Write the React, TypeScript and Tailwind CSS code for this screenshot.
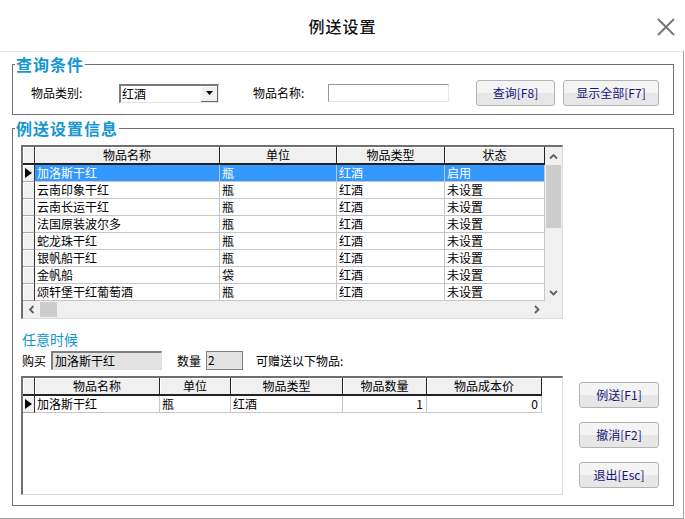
const blue = "text-[#1296d4]";

const mainRows = [
  ["加洛斯干红", "瓶", "红酒", "启用"],
  ["云南印象干红", "瓶", "红酒", "未设置"],
  ["云南长运干红", "瓶", "红酒", "未设置"],
  ["法国原装波尔多", "瓶", "红酒", "未设置"],
  ["蛇龙珠干红", "瓶", "红酒", "未设置"],
  ["银帆船干红", "瓶", "红酒", "未设置"],
  ["金帆船", "袋", "红酒", "未设置"],
  ["颂轩堡干红葡萄酒", "瓶", "红酒", "未设置"],
];

const mainCols = [
  { title: "物品名称", w: "w-[185px]" },
  { title: "单位", w: "w-[117px]" },
  { title: "物品类型", w: "w-[108px]" },
  { title: "状态", w: "w-[100px]" },
];

const giftCols = [
  { title: "物品名称", w: "w-[125px]", right: false },
  { title: "单位", w: "w-[71px]", right: false },
  { title: "物品类型", w: "w-[112px]", right: false },
  { title: "物品数量", w: "w-[84px]", right: true },
  { title: "物品成本价", w: "w-[115px]", right: true },
];

function Chevron({ dir }: { dir: "up" | "down" | "left" | "right" }) {
  const d = {
    up: "M1 5.5 L4.5 2 L8 5.5",
    down: "M1 2 L4.5 5.5 L8 2",
    left: "M5.5 1 L2 4.5 L5.5 8",
    right: "M2 1 L5.5 4.5 L2 8",
  }[dir];
  const vert = dir === "up" || dir === "down";
  return (
    <svg width={vert ? 9 : 7} height={vert ? 7 : 9} viewBox={vert ? "0 0 9 7" : "0 0 7 9"}>
      <path d={d} stroke="#606060" strokeWidth="1.8" fill="none" />
    </svg>
  );
}

function Pointer() {
  return (
    <svg width="7" height="10" viewBox="0 0 7 10">
      <path d="M0 0 L7 5 L0 10 Z" fill="#000" />
    </svg>
  );
}

function WinButton({ label, w }: { label: string; w: string }) {
  return (
    <button
      className={`${w} h-[26px] rounded-[3px] border border-[#b4b4b4] bg-[linear-gradient(to_bottom,#f4f4f4_50%,#e7e7e7_50%)] text-[12px] leading-[14px] text-[#14147a]`}
    >
      {label}
    </button>
  );
}

function HeadCell({ title, w }: { title: string; w: string }) {
  return (
    <div
      className={`${w} h-[18px] shrink-0 bg-[#f0f0f0] border-r border-b-2 border-r-[#222] border-b-[#222] shadow-[inset_1px_1px_0_#fff] text-center leading-[16px]`}
    >
      {title}
    </div>
  );
}

function IndCell({ head, active }: { head?: boolean; active?: boolean }) {
  return (
    <div
      className={`w-[12px] shrink-0 flex items-center justify-center bg-[#f0f0f0] border-r border-r-[#333] shadow-[inset_1px_1px_0_#fff] ${
        head ? "h-[18px] border-b-2 border-b-[#222]" : "h-[17px] border-b border-b-[#a8a8a8]"
      }`}
    >
      {active && <Pointer />}
    </div>
  );
}

function MainGrid() {
  return (
    <div className="w-[542px] border-t-2 border-l-2 border-t-[#6f6f6f] border-l-[#6f6f6f] border-r border-b border-r-[#dcdcdc] border-b-[#dcdcdc] bg-white">
      <div className="flex">
        <div>
          <div className="flex">
            <IndCell head />
            {mainCols.map((c) => (
              <HeadCell key={c.title} title={c.title} w={c.w} />
            ))}
          </div>
          {mainRows.map((r, i) => (
            <div key={i} className="flex">
              <IndCell active={i === 0} />
              {r.map((v, j) => (
                <div
                  key={j}
                  className={`${mainCols[j].w} h-[17px] shrink-0 border-r border-b border-[#c6c6c6] px-[2px] leading-[16px] whitespace-nowrap overflow-hidden ${
                    i === 0 ? "bg-[#3399ff] text-white" : ""
                  }`}
                >
                  {v}
                </div>
              ))}
            </div>
          ))}
        </div>
        <div className="w-[17px] bg-[#f0f0f0] flex flex-col">
          <div className="h-[18px] flex items-center justify-center">
            <Chevron dir="up" />
          </div>
          <div className="mx-[1px] h-[63px] bg-[#cdcdcd]" />
          <div className="flex-1" />
          <div className="h-[17px] flex items-center justify-center">
            <Chevron dir="down" />
          </div>
        </div>
      </div>
      <div className="flex h-[17px] bg-[#f0f0f0]">
        <div className="w-[17px] flex items-center justify-center">
          <Chevron dir="left" />
        </div>
        <div className="my-[1px] w-[17px] bg-[#cdcdcd]" />
        <div className="flex-1" />
        <div className="w-[17px] flex items-center justify-center">
          <Chevron dir="right" />
        </div>
        <div className="w-[17px]" />
      </div>
    </div>
  );
}

function GiftGrid() {
  const row = ["加洛斯干红", "瓶", "红酒", "1", "0"];
  return (
    <div className="w-[542px] h-[119px] border-t-2 border-l-2 border-t-[#6f6f6f] border-l-[#6f6f6f] border-r border-b border-r-[#dcdcdc] border-b-[#dcdcdc] bg-white">
      <div className="flex">
        <IndCell head />
        {giftCols.map((c) => (
          <HeadCell key={c.title} title={c.title} w={c.w} />
        ))}
      </div>
      <div className="flex">
        <IndCell active />
        {row.map((v, j) => (
          <div
            key={j}
            className={`${giftCols[j].w} h-[17px] shrink-0 border-r border-b border-[#c6c6c6] leading-[16px] whitespace-nowrap ${
              giftCols[j].right ? "text-right pr-[3px]" : "px-[2px]"
            }`}
          >
            {v}
          </div>
        ))}
      </div>
    </div>
  );
}

export default function App() {
  return (
    <div className="w-[685px] h-[519px] bg-white overflow-hidden text-[12px] text-black font-['Noto_Sans_CJK_SC',sans-serif]">
      <div className="h-[51px] grid grid-cols-[1fr_auto_1fr] items-center">
        <div />
        <div className="text-[16px] leading-[20px] font-medium tracking-[1px] text-[#111]">例送设置</div>
        <div className="justify-self-end mr-[10px] mt-[2px]">
          <svg width="18" height="18" viewBox="0 0 18 18">
            <path d="M1 1 L17 17 M17 1 L1 17" stroke="#777" strokeWidth="2" />
          </svg>
        </div>
      </div>

      <div className="w-[684px] h-[468px] border-t border-t-[#e6e6e6] border-r border-b border-r-[#a0a0a0] border-b-[#a0a0a0] pl-[12px] pt-[4px]">
        <fieldset className="w-[662px] border border-[#707070]">
          <legend className={`ml-[2px] px-[1px] text-[16px] leading-[16px] font-bold tracking-[1px] ${blue}`}>
            查询条件
          </legend>
          <div className="h-[42px] flex items-center pl-[18px]">
            <span className="w-[88px]">物品类别:</span>
            <div className="w-[100px] h-[19px] flex border-t-2 border-l-2 border-t-[#7a7a7a] border-l-[#7a7a7a] border-r border-b border-r-[#e3e3e3] border-b-[#e3e3e3] bg-white">
              <span className="flex-1 pl-[1px] leading-[16px]">红酒</span>
              <div className="w-[17px] h-[16px] flex items-center justify-center bg-[#f0f0f0] border-r border-b border-r-[#6a6a6a] border-b-[#6a6a6a] shadow-[inset_1px_1px_0_#fff]">
                <svg width="7" height="4" viewBox="0 0 7 4">
                  <path d="M0 0 L7 0 L3.5 4 Z" fill="#000" />
                </svg>
              </div>
            </div>
            <span className="ml-[34px] w-[75px]">物品名称:</span>
            <div className="w-[121px] h-[18px] border-t border-l border-t-[#9a9a9a] border-l-[#9a9a9a] border-r border-b border-r-[#e6e6e6] border-b-[#e6e6e6] bg-white" />
            <div className="ml-[27px]">
              <WinButton label="查询[F8]" w="w-[79px]" />
            </div>
            <div className="ml-[8px]">
              <WinButton label="显示全部[F7]" w="w-[96px]" />
            </div>
          </div>
        </fieldset>

        <fieldset className="mt-[5px] w-[662px] border border-[#707070]">
          <legend className={`ml-[2px] px-[1px] text-[16px] leading-[16px] font-bold tracking-[1px] ${blue}`}>
            例送设置信息
          </legend>
          <div className="pl-[8px] pt-[9px] pb-[10px]">
            <MainGrid />

            <div className={`mt-[12px] pl-[1px] text-[14px] leading-[16px] ${blue}`}>任意时候</div>

            <div className="mt-[4px] h-[19px] flex items-center pl-[1px]">
              <span className="w-[29px]">购买</span>
              <div className="w-[111px] h-[19px] bg-[#e3e3e3] border-t-2 border-l-2 border-t-[#808080] border-l-[#808080] border-r border-b border-r-[#dedede] border-b-[#dedede] pl-[2px] leading-[15px]">
                加洛斯干红
              </div>
              <span className="ml-[15px] w-[29px]">数量</span>
              <div className="w-[37px] h-[19px] bg-[#e3e3e3] border border-[#808080] pl-[1px] leading-[16px]">2</div>
              <span className="ml-[13px]">可赠送以下物品:</span>
            </div>

            <div className="mt-[6px] flex">
              <GiftGrid />
              <div className="ml-[16px] mt-[6px] flex flex-col gap-[14px]">
                <WinButton label="例送[F1]" w="w-[80px]" />
                <WinButton label="撤消[F2]" w="w-[80px]" />
                <WinButton label="退出[Esc]" w="w-[80px]" />
              </div>
            </div>
          </div>
        </fieldset>
      </div>
    </div>
  );
}
